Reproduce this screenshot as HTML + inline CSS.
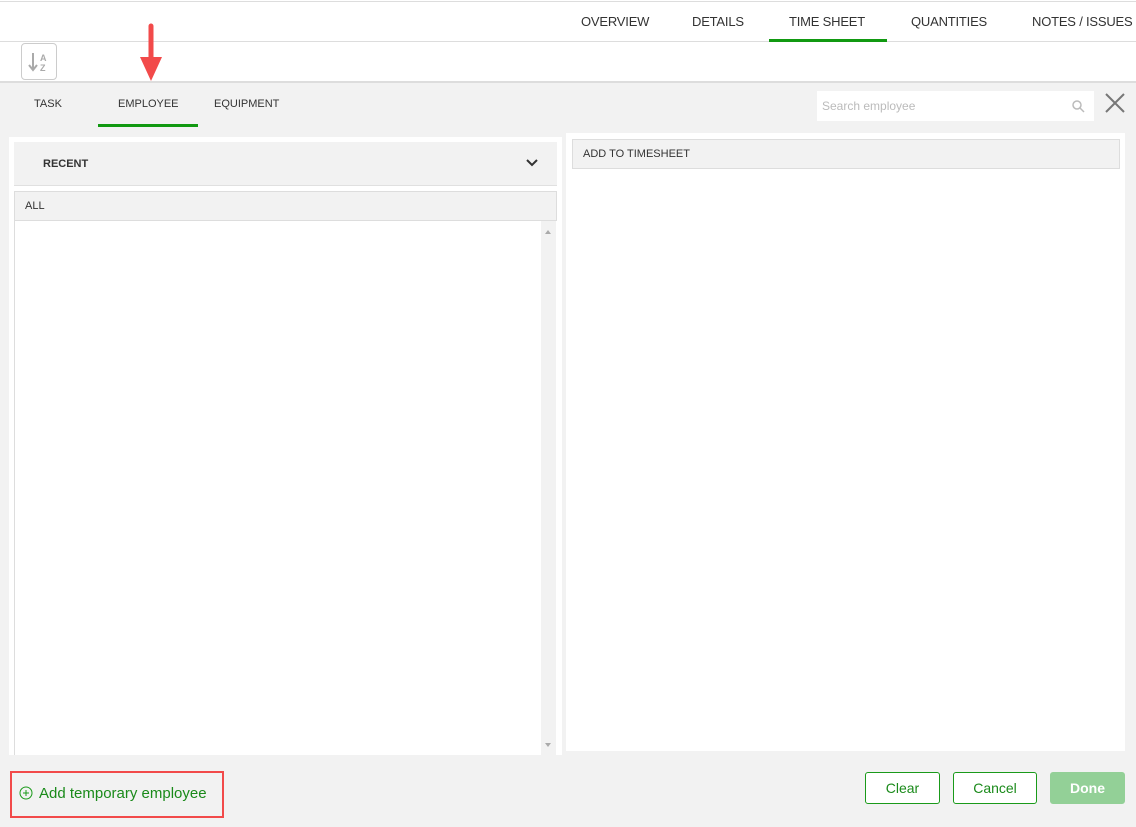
<!DOCTYPE html>
<html><head><style>
*{box-sizing:border-box;margin:0;padding:0}
body{width:1136px;height:827px;overflow:hidden;font-family:"Liberation Sans",sans-serif;background:#fff;position:relative;color:#333}
.a{position:absolute;white-space:nowrap}
.nav{font-size:13px;color:#333;top:14px;letter-spacing:-0.2px}
.tab{font-size:11px;color:#333;top:98px}
.btn{top:772px;height:32px;border:1px solid #1a9a1a;border-radius:3px;background:#fff;color:#1a8a1a;font-size:14px;text-align:center;line-height:30px}
</style></head><body>
<div class="a" style="left:0;top:1px;width:1136px;height:1px;background:#ddd"></div>
<div class="a" style="left:0;top:41px;width:1136px;height:1px;background:#ddd"></div>
<div class="a nav" style="left:581px">OVERVIEW</div>
<div class="a nav" style="left:692px">DETAILS</div>
<div class="a nav" style="left:789px">TIME SHEET</div>
<div class="a" style="left:769px;top:39px;width:118px;height:3px;background:#119911"></div>
<div class="a nav" style="left:911px">QUANTITIES</div>
<div class="a nav" style="left:1032px">NOTES / ISSUES</div>
<div class="a" style="left:21px;top:43px;width:36px;height:37px;border:1px solid #ccc;border-radius:4px"></div>
<svg class="a" style="left:27px;top:50px" width="24" height="24"><path d="M6 3v16M2 15l4 5 4-5" stroke="#aaa" stroke-width="2" fill="none"/><text x="13" y="11" font-size="9" fill="#aaa" font-weight="bold" font-family="Liberation Sans">A</text><text x="13" y="21" font-size="9" font-weight="bold" fill="#aaa" font-family="Liberation Sans">Z</text></svg>
<div class="a" style="left:0;top:81px;width:1136px;height:746px;background:#f2f2f2;border-top:2px solid #ddd"></div>
<svg class="a" style="left:137px;top:23px" width="28" height="62"><path d="M14 3v34" stroke="#f24a4a" stroke-width="5" stroke-linecap="round"/><path d="M3 34h22L14 58z" fill="#f24a4a"/></svg>
<div class="a tab" style="left:34px">TASK</div>
<div class="a tab" style="left:118px">EMPLOYEE</div>
<div class="a" style="left:98px;top:124px;width:100px;height:3px;background:#119911"></div>
<div class="a tab" style="left:214px">EQUIPMENT</div>
<div class="a" style="left:817px;top:91px;width:277px;height:30px;background:#fff;font-size:12px;color:#bbb;padding:8px 5px">Search employee</div>
<svg class="a" style="left:1071px;top:99px" width="14" height="14"><circle cx="6" cy="6" r="4" stroke="#bbb" stroke-width="1.5" fill="none"/><path d="M9 9l4 4" stroke="#bbb" stroke-width="1.5"/></svg>
<svg class="a" style="left:1104px;top:92px" width="22" height="22"><path d="M2 2l18 18M20 2L2 20" stroke="#777" stroke-width="2"/></svg>
<div class="a" style="left:9px;top:137px;width:553px;height:618px;background:#fff"></div>
<div class="a" style="left:14px;top:142px;width:543px;height:44px;background:#f2f2f2;border-bottom:1px solid #e0e0e0;font-size:11px;font-weight:bold;padding:16px 29px">RECENT</div>
<svg class="a" style="left:525px;top:158px" width="14" height="10"><path d="M2 2l5 5 5-5" stroke="#333" stroke-width="2" fill="none"/></svg>
<div class="a" style="left:14px;top:191px;width:543px;height:30px;background:#f2f2f2;border:1px solid #ddd;font-size:11px;padding:8px 10px">ALL</div>
<div class="a" style="left:14px;top:221px;width:1px;height:534px;background:#ddd"></div>
<div class="a" style="left:541px;top:221px;width:15px;height:534px;background:#f2f2f2"></div>
<div class="a" style="left:545px;top:227px;width:0;height:0;border:3px solid transparent;border-bottom:4px solid #aaa"></div>
<div class="a" style="left:545px;top:743px;width:0;height:0;border:3px solid transparent;border-top:4px solid #aaa"></div>
<div class="a" style="left:566px;top:133px;width:559px;height:618px;background:#fff"></div>
<div class="a" style="left:572px;top:139px;width:548px;height:30px;background:#f2f2f2;border:1px solid #ddd;font-size:11px;padding:8px 10px">ADD TO TIMESHEET</div>
<div class="a" style="left:10px;top:771px;width:214px;height:47px;border:2px solid #f24a4a"></div>
<svg class="a" style="left:19px;top:786px" width="14" height="14"><circle cx="7" cy="7" r="6" stroke="#1a9a1a" fill="none"/><path d="M7 4v6M4 7h6" stroke="#1a9a1a"/></svg>
<div class="a" style="left:39px;top:785px;font-size:15px;color:#1a8a1a">Add temporary employee</div>
<div class="a btn" style="left:865px;width:75px">Clear</div>
<div class="a btn" style="left:953px;width:84px">Cancel</div>
<div class="a btn" style="left:1050px;width:75px;background:#93d097;border-color:#93d097;color:#fff;font-weight:bold">Done</div>
</body></html>
